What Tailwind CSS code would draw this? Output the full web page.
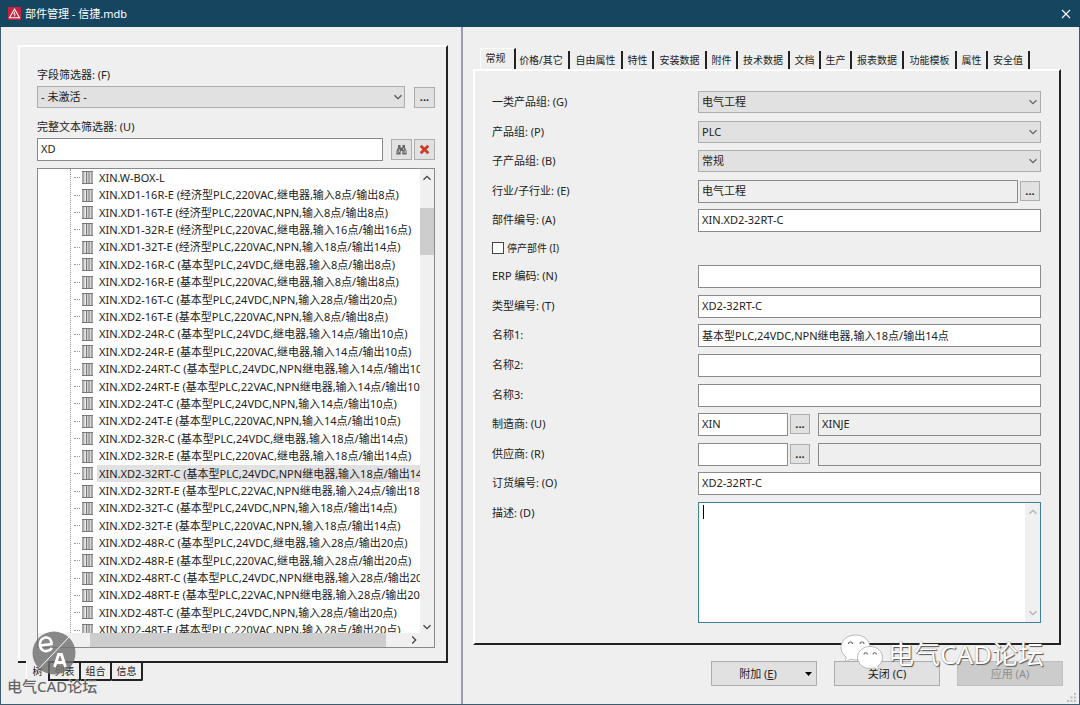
<!DOCTYPE html>
<html lang="zh-CN">
<head>
<meta charset="utf-8">
<meta name="viewport" content="width=device-width, initial-scale=1">
<title>部件管理 - 信捷.mdb</title>
<script src="https://cdn.jsdelivr.net/npm/@tailwindcss/browser@4"></script>
</head>
<body class="relative flex h-screen min-h-[705px] flex-col overflow-hidden bg-[#efefef] font-['Noto_Sans','Noto_Sans_CJK_SC',sans-serif] text-[11px] leading-4 text-[#222]">
<svg class="hidden">
  <symbol id="chev" viewBox="0 0 10 10"><path d="M1.5 3.2 5 6.7 8.5 3.2" fill="none" stroke="currentColor" stroke-width="1.3"/></symbol>
  <symbol id="part" viewBox="0 0 11 13"><path d="M0 .5h11M0 12.5h11" stroke="#777"/><path d="M1 1v11M4.5 1v11M7 1v11M10 1v11" stroke="#777" stroke-width="1.3"/><path d="M2.4 1v11M5.7 1v11M8.4 1v11" stroke="#c4c4c4" stroke-width=".8"/></symbol>
</svg>

<header class="flex h-[27px] shrink-0 items-center bg-[#16455f] pl-2 text-white">
  <svg class="mr-1 size-[13px]" viewBox="0 0 13 13"><rect width="13" height="13" rx="1" fill="#c8203c"/><path d="M6.5 2 11.5 10.7H1.5Z" fill="none" stroke="#fff" stroke-width="1.1"/><path d="M7 4.5 5.8 7h1.4L6.3 9.6" fill="none" stroke="#fff" stroke-width=".9"/></svg>
  <h1 class="flex-1 text-[11px]">部件管理 - 信捷.mdb</h1>
  <button aria-label="关闭窗口" class="mr-[9px]"><svg class="size-[10px]" viewBox="0 0 10 10"><path d="M1 1 9 9M9 1 1 9" stroke="#fff" stroke-width="1.1"/></svg></button>
</header>

<main class="grid min-h-0 flex-1 grid-cols-[462px_minmax(0,1fr)] grid-rows-[minmax(0,1fr)] border border-t-0 border-[#3d5c70]">
  <section class="flex min-h-0 flex-col border-r-2 border-[#9c9cac] pt-[18px] pr-[13px] pb-[23px] pl-[17px]">
    <div class="flex min-h-0 flex-1 flex-col border-t-2 border-r-2 border-l-2 border-t-white border-r-[#222] border-l-white pt-[20px] pr-[11px] pb-[13px] pl-[17px]">
      <label for="flt" class="mb-[3px]">字段筛选器: (F)</label>
      <div class="flex items-center gap-[9px]">
        <div class="relative flex-1">
          <select id="flt" class="block h-[22px] w-full appearance-none border border-[#adadad] bg-[#e1e1e1] pl-[3px]"><option>- 未激活 -</option></select>
          <svg class="pointer-events-none absolute top-[6px] right-[2px] size-[10px] text-[#555]"><use href="#chev"/></svg>
        </div>
        <button aria-label="编辑筛选器" class="h-[21px] w-[21px] border border-[#adadad] bg-[#e1e1e1] font-bold">...</button>
      </div>
      <label for="txt" class="mt-[11px] mb-[3px]">完整文本筛选器: (U)</label>
      <div class="flex items-center">
        <input id="txt" value="XD" class="h-[23px] min-w-0 flex-1 border border-[#8a8a8a] bg-white px-[3px] pb-[2px]">
        <button aria-label="搜索" class="ml-2 flex size-[21px] items-center justify-center border border-[#adadad] bg-[#e1e1e1]">
          <svg class="size-[11px]" viewBox="0 0 11 11"><path d="M2 1h2.500v2.500h2V1H9v2.500L10.600 7v3.500H6.300V7H4.700v3.500H.4V7L2 3.500Z" fill="#666"/><path d="M2 7v2M3.300 5v3M8 7v2M7.600 4v2M9.300 6v3" stroke="#ddd" stroke-width=".7"/></svg>
        </button>
        <button aria-label="清除" class="ml-[2px] flex size-[21px] items-center justify-center border border-[#adadad] bg-[#e1e1e1]">
          <svg class="size-[11px]" viewBox="0 0 11 11"><path d="M1.700 1.700 9.300 9.300M9.300 1.700 1.700 9.300" stroke="#cf3a28" stroke-width="2.800"/></svg>
        </button>
      </div>
      <div class="mt-[7px] flex min-h-0 flex-1 flex-col border border-[#8a8a8a] bg-white">
        <div class="flex min-h-0 flex-1">
          <div class="min-w-0 flex-1 overflow-hidden pl-[32px]">
            <ul id="tree" role="tree" aria-label="部件" class="flex h-[470px] flex-col border-l border-dotted border-[#999]"></ul>
          </div>
          <div class="flex w-[14px] flex-col items-center bg-[#f0f0f0]">
            <svg class="mt-[4px] size-[10px] rotate-180 text-[#444]"><use href="#chev"/></svg>
            <div class="mt-[25px] h-[47px] w-full bg-[#cdcdcd]"></div>
            <svg class="mt-auto mb-px size-[10px] text-[#444]"><use href="#chev"/></svg>
          </div>
        </div>
        <div class="flex h-[14px] shrink-0 items-center bg-[#f0f0f0] pr-[15px]">
          <div class="ml-[52px] h-full w-[296px] bg-[#cdcdcd]"></div>
          <svg class="ml-auto size-[10px] -rotate-90 text-[#444]"><use href="#chev"/></svg>
        </div>
      </div>
    </div>
    <div role="tablist" class="flex h-[20px] text-[10px]">
      <span class="w-[8px] border-t-2 border-[#222]"></span>
      <button role="tab" aria-selected="true" class="w-[24px] border-r-2 border-l border-r-[#222] border-l-white text-center">树</button>
      <button role="tab" class="w-[31px] rounded-br-xs border-2 border-l-0 border-[#222] leading-3">列表</button>
      <button role="tab" class="w-[31px] rounded-br-xs border-2 border-l-0 border-[#222] leading-3">组合</button>
      <button role="tab" class="w-[31px] rounded-br-xs border-2 border-l-0 border-[#222] leading-3">信息</button>
      <span class="flex-1 border-t-2 border-[#222]"></span>
    </div>
  </section>

  <section class="flex min-h-0 min-w-0 flex-col pt-[21px] pr-[16px] pb-[18px] pl-[10px]">
    <div role="tablist" class="flex h-[21px] items-end pl-[7px] text-[10px] whitespace-nowrap">
      <button role="tab" aria-selected="true" class="h-[21px] w-[36px] border-t border-r-2 border-l border-t-white border-r-[#222] border-l-white pr-[4px] pb-[2px]">常规</button>
      <button role="tab" class="h-[18px] w-[54px] border-r-2 border-[#222] pr-[2px]">价格/其它</button>
      <button role="tab" class="h-[18px] w-[53px] border-r-2 border-[#222]">自由属性</button>
      <button role="tab" class="h-[18px] w-[31px] border-r-2 border-[#222]">特性</button>
      <button role="tab" class="h-[18px] w-[53px] border-r-2 border-[#222]">安装数据</button>
      <button role="tab" class="h-[18px] w-[31px] border-r-2 border-[#222]">附件</button>
      <button role="tab" class="h-[18px] w-[52px] border-r-2 border-[#222]">技术数据</button>
      <button role="tab" class="h-[18px] w-[31px] border-r-2 border-[#222]">文档</button>
      <button role="tab" class="h-[18px] w-[31px] border-r-2 border-[#222]">生产</button>
      <button role="tab" class="h-[18px] w-[52px] border-r-2 border-[#222]">报表数据</button>
      <button role="tab" class="h-[18px] w-[53px] border-r-2 border-[#222]">功能模板</button>
      <button role="tab" class="h-[18px] w-[31px] border-r-2 border-[#222]">属性</button>
      <button role="tab" class="h-[18px] w-[42px] border-r-2 border-[#222]">安全值</button>
    </div>
    <form class="mr-[2px] flex min-h-0 flex-1 flex-col border-2 border-t-white border-r-[#222] border-b-[#222] border-l-white pt-[20px] pr-[18px] pb-[20px] pl-[17px]">
      <div class="grid h-[148px] auto-rows-fr">
        <div class="flex items-start"><label for="f1" class="w-[206px] pt-[3px]">一类产品组: (G)</label>
          <div class="relative flex-1"><select id="f1" class="block h-[22px] w-full appearance-none border border-[#adadad] bg-[#e1e1e1] pl-[3px]"><option>电气工程</option></select><svg class="pointer-events-none absolute top-[6px] right-[3px] size-[10px] text-[#666]"><use href="#chev"/></svg></div></div>
        <div class="flex items-start"><label for="f2" class="w-[206px] pt-[3px]">产品组: (P)</label>
          <div class="relative flex-1"><select id="f2" class="block h-[22px] w-full appearance-none border border-[#adadad] bg-[#e1e1e1] pl-[3px]"><option>PLC</option></select><svg class="pointer-events-none absolute top-[6px] right-[3px] size-[10px] text-[#666]"><use href="#chev"/></svg></div></div>
        <div class="flex items-start"><label for="f3" class="w-[206px] pt-[3px]">子产品组: (B)</label>
          <div class="relative flex-1"><select id="f3" class="block h-[22px] w-full appearance-none border border-[#adadad] bg-[#e1e1e1] pl-[3px]"><option>常规</option></select><svg class="pointer-events-none absolute top-[6px] right-[3px] size-[10px] text-[#666]"><use href="#chev"/></svg></div></div>
        <div class="flex items-start"><label for="f4" class="w-[206px] pt-[3px]">行业/子行业: (E)</label>
          <input id="f4" readonly value="电气工程" class="h-[23px] min-w-0 flex-1 border border-[#8a8a8a] bg-[#efefef] px-[3px] pb-[2px]"><button type="button" aria-label="选择行业" class="mt-px mr-px ml-[2px] size-[20px] border border-[#adadad] bg-[#e1e1e1] font-bold">...</button></div>
        <div class="flex items-start"><label for="f5" class="w-[206px] pt-[3px]">部件编号: (A)</label>
          <input id="f5" value="XIN.XD2-32RT-C" class="h-[23px] min-w-0 flex-1 border border-[#8a8a8a] bg-white px-[3px] pb-[2px]"></div>
      </div>
      <div class="flex h-[26px] items-start pt-px">
        <input id="stop" type="checkbox" class="mt-[2px] mr-[3px] size-[12px] appearance-none border border-[#444] bg-white"><label for="stop" class="text-[10px] leading-4">停产部件 (I)</label>
      </div>
      <div class="grid h-[237px] auto-rows-fr">
        <div class="flex items-start"><label for="g1" class="w-[206px] pt-[3px]">ERP 编码: (N)</label><input id="g1" class="h-[23px] min-w-0 flex-1 border border-[#8a8a8a] bg-white px-[3px] pb-[2px]"></div>
        <div class="flex items-start"><label for="g2" class="w-[206px] pt-[3px]">类型编号: (T)</label><input id="g2" value="XD2-32RT-C" class="h-[23px] min-w-0 flex-1 border border-[#8a8a8a] bg-white px-[3px] pb-[2px]"></div>
        <div class="flex items-start"><label for="g3" class="w-[206px] pt-[3px]">名称1:</label><input id="g3" value="基本型PLC,24VDC,NPN继电器,输入18点/输出14点" class="h-[23px] min-w-0 flex-1 border border-[#8a8a8a] bg-white px-[3px] pb-[2px]"></div>
        <div class="flex items-start"><label for="g4" class="w-[206px] pt-[3px]">名称2:</label><input id="g4" class="h-[23px] min-w-0 flex-1 border border-[#8a8a8a] bg-white px-[3px] pb-[2px]"></div>
        <div class="flex items-start"><label for="g5" class="w-[206px] pt-[3px]">名称3:</label><input id="g5" class="h-[23px] min-w-0 flex-1 border border-[#8a8a8a] bg-white px-[3px] pb-[2px]"></div>
        <div class="flex items-start"><label for="g6" class="w-[206px] pt-[3px]">制造商: (U)</label><input id="g6" value="XIN" class="h-[23px] w-[90px] border border-[#8a8a8a] bg-white px-[3px] pb-[2px]"><button type="button" aria-label="选择制造商" class="mt-px mr-2 ml-[2px] size-[20px] border border-[#adadad] bg-[#e1e1e1] font-bold">...</button><input aria-label="制造商名称" readonly value="XINJE" class="h-[23px] min-w-0 flex-1 border border-[#8a8a8a] bg-[#efefef] px-[3px] pb-[2px]"></div>
        <div class="flex items-start"><label for="g7" class="w-[206px] pt-[3px]">供应商: (R)</label><input id="g7" class="h-[23px] w-[90px] border border-[#8a8a8a] bg-white px-[3px] pb-[2px]"><button type="button" aria-label="选择供应商" class="mt-px mr-2 ml-[2px] size-[20px] border border-[#adadad] bg-[#e1e1e1] font-bold">...</button><input aria-label="供应商名称" readonly class="h-[23px] min-w-0 flex-1 border border-[#8a8a8a] bg-[#efefef] px-[3px] pb-[2px]"></div>
        <div class="flex items-start"><label for="g8" class="w-[206px] pt-[3px]">订货编号: (O)</label><input id="g8" value="XD2-32RT-C" class="h-[23px] min-w-0 flex-1 border border-[#8a8a8a] bg-white px-[3px] pb-[2px]"></div>
      </div>
      <div class="flex min-h-0 flex-1 items-stretch"><label for="desc" class="w-[206px] pt-[3px]">描述: (D)</label>
        <div class="relative flex min-w-0 flex-1 border border-[#3f7f9b] bg-white">
          <textarea id="desc" class="min-w-0 flex-1 resize-none px-[3px] outline-none"></textarea>
          <span class="absolute top-[2px] left-[4px] h-[14px] w-px bg-black"></span>
          <div class="flex w-[15px] flex-col items-center justify-between bg-[#f0f0f0] py-[4px] text-[#b0b0b0]">
            <svg class="size-[10px] rotate-180"><use href="#chev"/></svg>
            <svg class="size-[10px]"><use href="#chev"/></svg>
          </div>
        </div>
      </div>
    </form>
    <div class="mt-[16px] flex justify-end gap-[17px]">
      <button class="relative h-[25px] w-[106px] border border-[#adadad] bg-[#e1e1e1] pr-3">附加 (<u>E</u>)<svg class="absolute top-[10px] right-[4px] h-[4px] w-[7px]" viewBox="0 0 7 4"><path d="M0 0h7L3.500 4Z"/></svg></button>
      <button class="h-[25px] w-[106px] border border-[#adadad] bg-[#e1e1e1]">关闭 (C)</button>
      <button disabled class="h-[25px] w-[106px] border border-[#bfbfbf] bg-[#cccccc] text-[#8e8e8e]">应用 (A)</button>
    </div>
  </section>
</main>

<svg class="absolute right-[4px] bottom-[3px] size-[9px]" viewBox="0 0 9 9" fill="#bbb"><path d="M7 0h2v2H7zM7 3.500h2v2H7zM7 7h2v2H7zM3.500 3.500h2v2h-2zM3.500 7h2v2h-2zM0 7h2v2H0z"/></svg>

<svg class="pointer-events-none absolute top-[631px] left-[32px] size-[44px]" viewBox="0 0 44 44">
  <circle cx="22" cy="22" r="21.500" fill="#707070" fill-opacity=".82"/>
  <path d="M7.500 37 37 6" stroke="#fff" stroke-width="1"/>
  <path d="M8 14.500 19.500 13C19.500 8.500 17 6 13.500 6.500 10 7 7.500 10 8 14.500 8.500 18.500 11.500 20.500 15 20 17.500 19.600 19 18.500 20 17" fill="none" stroke="#fff" stroke-width="2.600"/>
  <path d="M22.500 36 26.500 23.500h3L33.500 36M24.500 31.500h7" fill="none" stroke="#fff" stroke-width="2.800"/>
</svg>
<span class="pointer-events-none absolute top-[676px] left-[7px] text-[15px] leading-5 font-medium text-[#666] [text-shadow:0_0_1px_#fff]">电气CAD论坛</span>

<div class="pointer-events-none absolute right-[36px] bottom-[31px] flex items-start gap-[4px]">
  <svg class="h-[36px] w-[44px]" viewBox="0 0 44 36">
    <g fill="#fff" stroke="#aaa" stroke-width=".8"><path d="M15.500 1C7 1 1 6.500 1 13.500c0 4 2 7.300 5.300 9.700L5 28l5.500-2.800c1.600.4 3.300.7 5 .7 8.500 0 14.500-5.500 14.500-12.400S24 1 15.500 1Z"/><path d="M30 12.500c-7 0-12.500 4.800-12.500 11S23 34.500 30 34.500c1.500 0 3-.2 4.300-.6L39 36l-1.200-4c3-2 4.700-5 4.700-8.500 0-6.200-5.500-11-12.500-11Z"/></g>
    <g fill="none" stroke="#666" stroke-width="1.100"><path d="M8.500 10a2 2 0 0 1 4 0M20 10a2 2 0 0 1 4 0M24 20.500a1.700 1.700 0 0 1 3.400 0M33 20.500a1.700 1.700 0 0 1 3.400 0"/></g>
  </svg>
  <span class="text-[26px] leading-10 text-white [text-shadow:1px_1px_1px_#555,0_0_1px_#888]">电气CAD论坛</span>
</div>

<template id="row">
  <li role="treeitem" class="flex min-h-0 flex-1 items-center whitespace-nowrap"><span class="ml-[3px] w-[6px] shrink-0 border-t border-dotted border-[#999]"></span><svg class="ml-[2px] h-[13px] w-[11px] shrink-0"><use href="#part"/></svg><span class="ml-[4px] flex h-full flex-1 items-center pl-[2px]"></span></li>
</template>
<script>
const parts = [
  "W-BOX-L",
  "XD1-16R-E (经济型PLC,220VAC,继电器,输入8点/输出8点)",
  "XD1-16T-E (经济型PLC,220VAC,NPN,输入8点/输出8点)",
  "XD1-32R-E (经济型PLC,220VAC,继电器,输入16点/输出16点)",
  "XD1-32T-E (经济型PLC,220VAC,NPN,输入18点/输出14点)",
  "XD2-16R-C (基本型PLC,24VDC,继电器,输入8点/输出8点)",
  "XD2-16R-E (基本型PLC,220VAC,继电器,输入8点/输出8点)",
  "XD2-16T-C (基本型PLC,24VDC,NPN,输入28点/输出20点)",
  "XD2-16T-E (基本型PLC,220VAC,NPN,输入8点/输出8点)",
  "XD2-24R-C (基本型PLC,24VDC,继电器,输入14点/输出10点)",
  "XD2-24R-E (基本型PLC,220VAC,继电器,输入14点/输出10点)",
  "XD2-24RT-C (基本型PLC,24VDC,NPN继电器,输入14点/输出10点)",
  "XD2-24RT-E (基本型PLC,22VAC,NPN继电器,输入14点/输出10点)",
  "XD2-24T-C (基本型PLC,24VDC,NPN,输入14点/输出10点)",
  "XD2-24T-E (基本型PLC,220VAC,NPN,输入14点/输出10点)",
  "XD2-32R-C (基本型PLC,24VDC,继电器,输入18点/输出14点)",
  "XD2-32R-E (基本型PLC,220VAC,继电器,输入18点/输出14点)",
  "XD2-32RT-C (基本型PLC,24VDC,NPN继电器,输入18点/输出14点)",
  "XD2-32RT-E (基本型PLC,22VAC,NPN继电器,输入24点/输出18点)",
  "XD2-32T-C (基本型PLC,24VDC,NPN,输入18点/输出14点)",
  "XD2-32T-E (基本型PLC,220VAC,NPN,输入18点/输出14点)",
  "XD2-48R-C (基本型PLC,24VDC,继电器,输入28点/输出20点)",
  "XD2-48R-E (基本型PLC,220VAC,继电器,输入28点/输出20点)",
  "XD2-48RT-C (基本型PLC,24VDC,NPN继电器,输入28点/输出20点)",
  "XD2-48RT-E (基本型PLC,22VAC,NPN继电器,输入28点/输出20点)",
  "XD2-48T-C (基本型PLC,24VDC,NPN,输入28点/输出20点)",
  "XD2-48T-E (基本型PLC,220VAC,NPN,输入28点/输出20点)"
];
const tree = document.getElementById("tree"), tpl = document.getElementById("row");
parts.forEach((name, i) => {
  const li = tpl.content.cloneNode(true).firstElementChild;
  li.lastElementChild.textContent = "XIN." + name;
  if (i === 17) { li.setAttribute("aria-selected", "true"); li.lastElementChild.classList.add("bg-[#e1e1e1]"); }
  tree.append(li);
});
</script>
</body>
</html>
